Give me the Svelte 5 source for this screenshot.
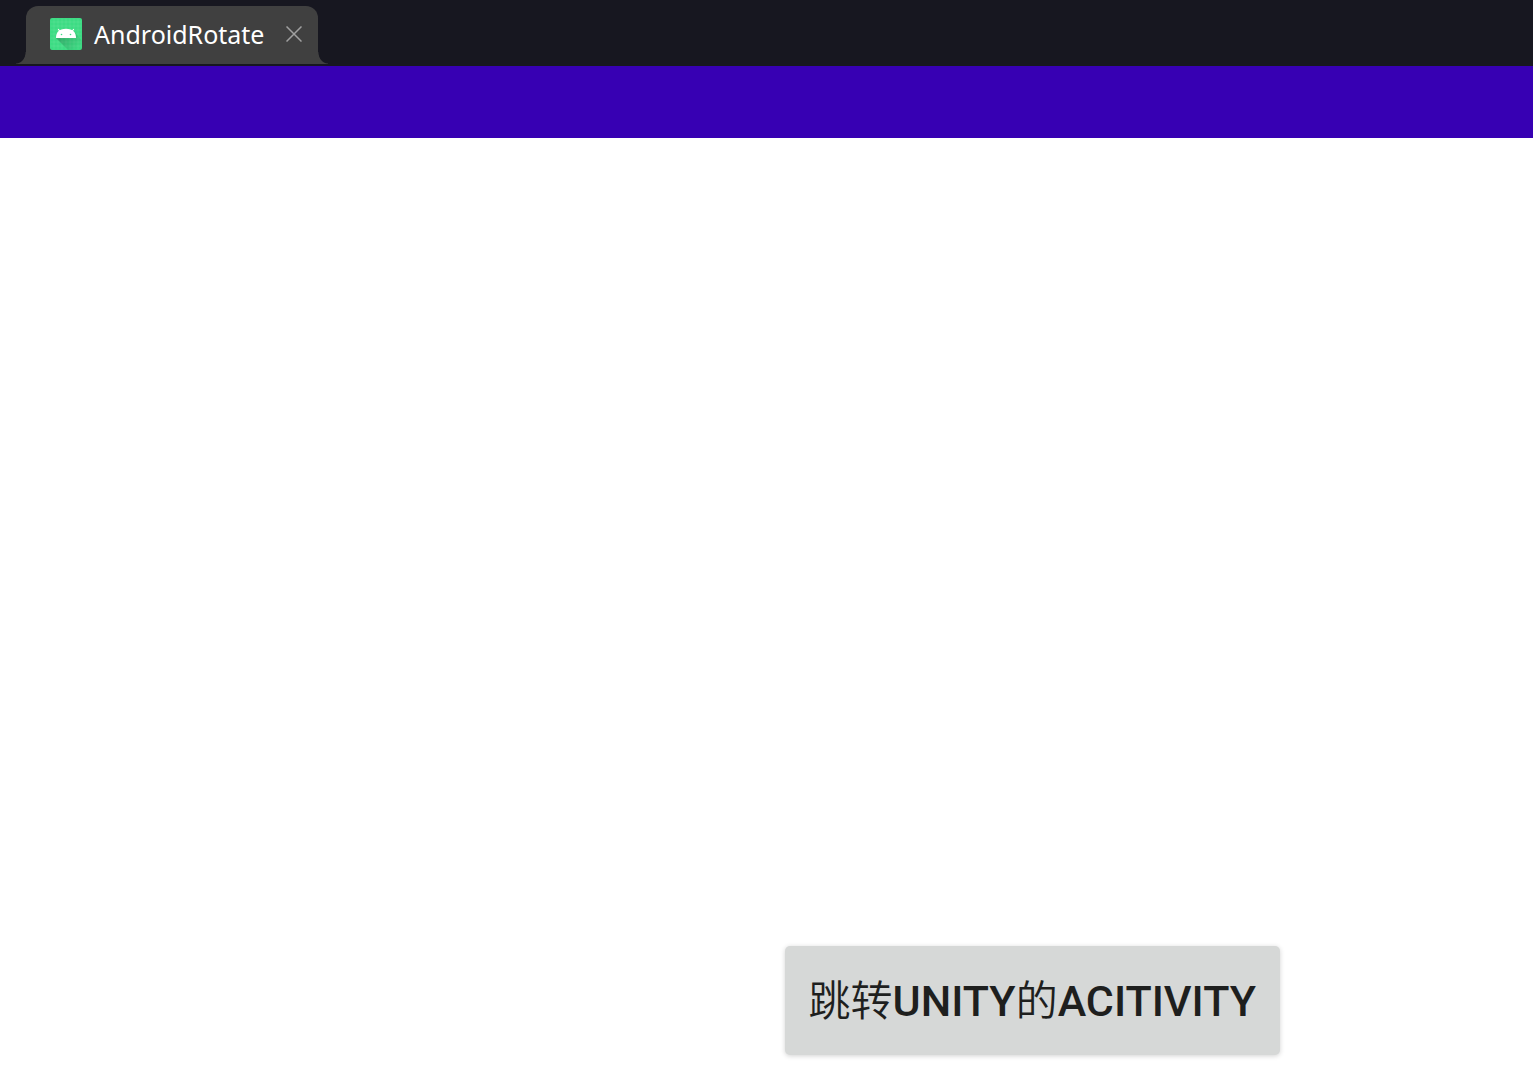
<script>
  let tabs = $state([{ id: 1, title: 'AndroidRotate' }]);

  function close(id) {
    tabs = tabs.filter((tab) => tab.id !== id);
  }
</script>

<div class="window">
  <header class="tab-bar">
    {#each tabs as tab (tab.id)}
      <div class="tab">
        <svg class="app-icon" viewBox="0 0 32 32" aria-hidden="true">
          <defs>
            <linearGradient id="shade" x1="8" y1="14" x2="30" y2="32" gradientUnits="userSpaceOnUse">
              <stop offset="0" stop-opacity=".26" />
              <stop offset=".9" stop-opacity=".02" />
            </linearGradient>
          </defs>
          <rect width="32" height="32" rx="2" fill="#3ddc84" />
          <path
            d="M4 .5V31.500M8 .5V31.500M12 .5V31.500M16 .5V31.500M20 .5V31.500M24 .5V31.500M28 .5V31.500M.5 4H31.500M.5 8H31.500M.5 12H31.500M.5 16H31.500M.5 20H31.500M.5 24H31.500M.5 28H31.500"
            stroke="#fff"
            stroke-opacity=".08"
          />
          <path d="M6 20L18 32H30Q32 32 32 30V23L23 12Z" fill="url(#shade)" />
          <path d="M8.500 11.500L10.500 14M23.500 11.500L21.500 14" stroke="#fff" stroke-width="1.200" stroke-linecap="round" />
          <path d="M6 20C6 14.500 9 10.800 16 10.800S26 14.500 26 20Z" fill="#fff" />
          <circle cx="11.500" cy="16.500" r=".8" fill="#3ddc84" />
          <circle cx="20.500" cy="16.500" r=".8" fill="#3ddc84" />
        </svg>
        <span class="title">{tab.title}</span>
        <button class="close" aria-label="Close {tab.title}" onclick={() => close(tab.id)}>
          <svg viewBox="0 0 16 16" aria-hidden="true">
            <path d="M.5 .5L15.500 15.500M15.500 .5L.5 15.500" stroke="#a0a0a0" stroke-width="1.500" />
          </svg>
        </button>
      </div>
    {/each}
  </header>
  <div class="status-bar"></div>
  <main>
    <button class="jump"><span>跳转</span>UNITY<span>的</span>ACITIVITY</button>
  </main>
</div>

<style>
  :global(body) {
    margin: 0;
    background: #fff;
  }

  .window {
    display: flex;
    flex-direction: column;
    min-height: 100vh;
  }

  .tab-bar {
    display: flex;
    align-items: flex-end;
    box-sizing: border-box;
    min-height: 66px;
    padding: 6px 26px 2px;
    background: #171720;
  }

  .tab {
    position: relative;
    display: flex;
    align-items: center;
    height: 58px;
    box-sizing: border-box;
    padding: 0 16px 2px 24px;
    border-radius: 12px 12px 0 0;
    background: #404040;
  }

  .tab::before,
  .tab::after {
    content: '';
    position: absolute;
    bottom: 0;
    width: 10px;
    height: 12px;
  }

  .tab::before {
    right: 100%;
    background: radial-gradient(ellipse 10px 12px at 0 0, transparent 92%, #404040 100%);
  }

  .tab::after {
    left: 100%;
    background: radial-gradient(ellipse 10px 12px at 100% 0, transparent 92%, #404040 100%);
  }

  .app-icon {
    width: 32px;
    height: 32px;
    margin-right: 12px;
  }

  .title {
    margin-right: 22px;
    font: 25px/36px 'Noto Sans', 'Open Sans', sans-serif;
    color: #fff;
  }

  .close {
    width: 16px;
    height: 16px;
    padding: 0;
    border: 0;
    background: none;
    cursor: pointer;
  }

  .close svg {
    display: block;
  }

  .status-bar {
    height: 72px;
    background: #3700b3;
  }

  main {
    flex: 1;
    display: flex;
    align-items: flex-end;
    justify-content: flex-end;
    padding: 0 253px 33px 0;
  }

  .jump {
    padding: 25px 24px 23px;
    border: 0;
    border-radius: 5px;
    background: #d6d8d7;
    box-shadow: 0 1px 5px rgba(0, 0, 0, 0.18);
    color: #1e1f1e;
    font: 500 43px/60px Roboto, 'Noto Sans CJK SC', sans-serif;
    white-space: nowrap;
    cursor: pointer;
  }

  .jump span {
    font-size: 42px;
    font-weight: 350;
  }
</style>
